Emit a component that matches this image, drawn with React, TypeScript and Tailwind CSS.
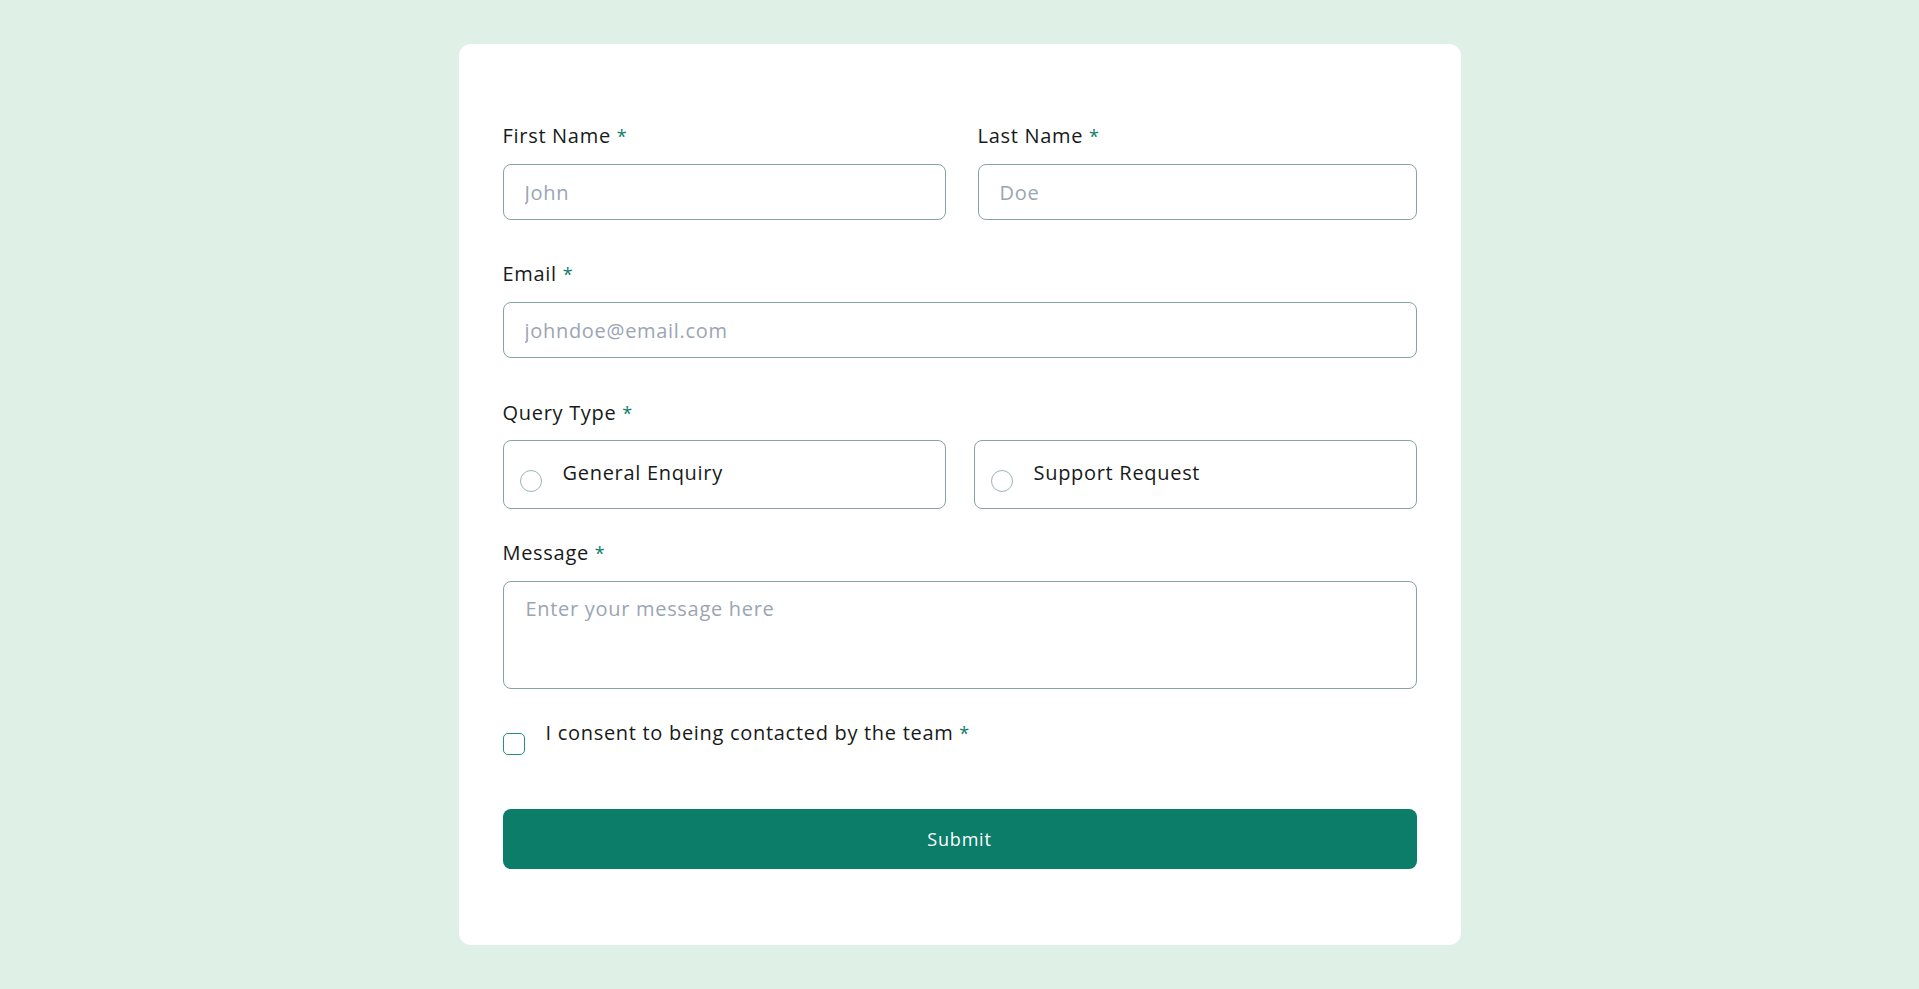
import { useState } from "react";

const font = { fontFamily: '"Open Sans", "Liberation Sans", sans-serif' };

function Label({ children }: { children: React.ReactNode }) {
  return (
    <label className="block h-7 text-[20px] leading-7 tracking-[0.7px] text-[#171a1a]">
      {children} <span className="text-[18px] text-[#0c7d69]">*</span>
    </label>
  );
}

const inputClass =
  "block h-[56px] w-full rounded-lg border border-[#87a3a6] bg-white px-[21px] text-[20px] tracking-[0.7px] text-[#171a1a] outline-none placeholder:text-[#9aa5b4]";

function RadioOption({ label, checked, onSelect }: { label: string; checked: boolean; onSelect: () => void }) {
  return (
    <button
      type="button"
      onClick={onSelect}
      className="flex h-[69px] items-start rounded-lg border border-[#87a3a6] bg-white pl-4 text-left"
    >
      <span className="mt-[29px] flex h-[22px] w-[22px] shrink-0 items-center justify-center rounded-full border-[1.5px] border-[#9fb4b6]">
        {checked && <span className="h-[11px] w-[11px] rounded-full bg-[#0c7d69]" />}
      </span>
      <span className="ml-[21px] mt-[18px] text-[20px] leading-7 tracking-[0.7px] text-[#171a1a]">{label}</span>
    </button>
  );
}

export default function App() {
  const [query, setQuery] = useState<string | null>(null);
  const [consent, setConsent] = useState(false);

  return (
    <div className="min-h-screen bg-[#dff1e7] pb-[43px] pt-[44px]" style={font}>
      <form
        className="mx-auto w-[1002px] rounded-xl bg-white px-[44px] pb-[76px] pt-[78px]"
        onSubmit={(e) => e.preventDefault()}
      >
        <div className="grid grid-cols-[443px_1fr] gap-x-8">
          <div>
            <Label>First Name</Label>
            <input className={`mt-[14px] ${inputClass}`} placeholder="John" />
          </div>
          <div>
            <Label>Last Name</Label>
            <input className={`mt-[14px] ${inputClass}`} placeholder="Doe" />
          </div>
        </div>

        <div className="mt-[40px]">
          <Label>Email</Label>
          <input className={`mt-[14px] ${inputClass}`} placeholder="johndoe@email.com" />
        </div>

        <div className="mt-[41px]">
          <Label>Query Type</Label>
          <div className="mt-[13px] grid grid-cols-2 gap-x-[28px]">
            <RadioOption label="General Enquiry" checked={query === "general"} onSelect={() => setQuery("general")} />
            <RadioOption label="Support Request" checked={query === "support"} onSelect={() => setQuery("support")} />
          </div>
        </div>

        <div className="mt-[30px]">
          <Label>Message</Label>
          <textarea
            className="mt-[14px] block h-[108px] w-full resize-none rounded-lg border border-[#87a3a6] bg-white px-[22px] pt-[13px] text-[20px] leading-7 tracking-[0.7px] text-[#171a1a] outline-none placeholder:text-[#9aa5b4]"
            placeholder="Enter your message here"
          />
        </div>

        <div className="mt-[30px] flex items-start">
          <button
            type="button"
            onClick={() => setConsent(!consent)}
            className="mt-[14px] flex h-[22px] w-[22px] shrink-0 items-center justify-center rounded-[5px] border-[1.5px] border-[#2a8c7b] bg-white"
          >
            {consent && (
              <svg viewBox="0 0 16 16" className="h-3 w-3" fill="none" stroke="#0c7d69" strokeWidth="2.5">
                <path d="M3 8.5l3.2 3L13 4.5" />
              </svg>
            )}
          </button>
          <span className="ml-[21px] text-[20px] leading-7 tracking-[0.7px] text-[#171a1a]">
            I consent to being contacted by the team <span className="text-[18px] text-[#0c7d69]">*</span>
          </span>
        </div>

        <button
          type="submit"
          className="mt-[54px] block h-[60px] w-full rounded-lg bg-[#0c7d69] text-[18px] tracking-[0.8px] text-white"
        >
          Submit
        </button>
      </form>
    </div>
  );
}
